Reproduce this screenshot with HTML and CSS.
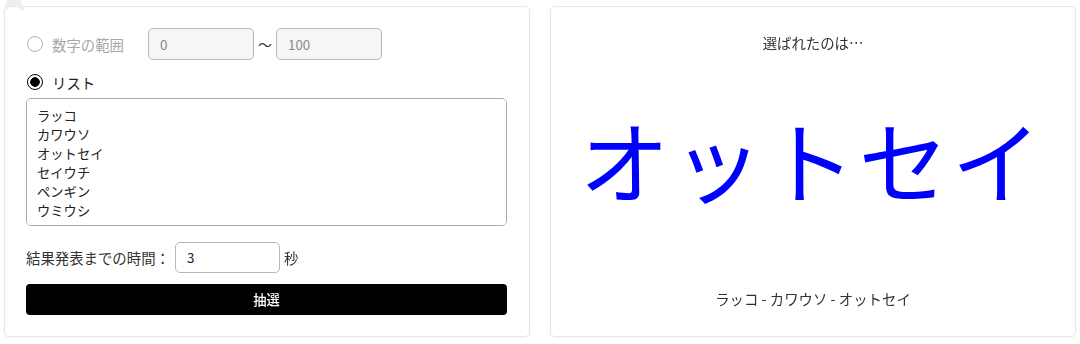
FILE: index.html
```html
<!DOCTYPE html>
<html lang="ja">
<head>
    <meta charset="UTF-8">
    <meta name="viewport" content="width=device-width, initial-scale=1.0">
    <title>抽選</title>
    <link rel="stylesheet" href="styles.css">
</head>
<body>
    <svg class="corner-star" width="30" height="24" viewBox="0 0 30 24">
        <polygon points="14,-16 18,-6 30,-6 21,1 25,12 14,5 3,12 7,1 -2,-6 10,-6" fill="#eeeeee"/>
    </svg>
    <main class="page">
        <section class="card settings">
            <div class="row range-row">
                <label class="choice disabled">
                    <input type="radio" name="mode">
                    <span>数字の範囲</span>
                </label>
                <input class="num-input" type="text" value="0" disabled>
                <span class="tilde">〜</span>
                <input class="num-input" type="text" value="100" disabled>
            </div>
            <div class="row list-row">
                <label class="choice">
                    <input type="radio" name="mode" checked>
                    <span>リスト</span>
                </label>
            </div>
            <textarea class="list-box">ラッコ
カワウソ
オットセイ
セイウチ
ペンギン
ウミウシ</textarea>
            <div class="row time-row">
                <span>結果発表までの時間：</span>
                <input class="num-input time-input" type="text" value="3">
                <span class="unit">秒</span>
            </div>
            <button class="draw-button">抽選</button>
        </section>
        <section class="card result">
            <div class="result-title">選ばれたのは…</div>
            <div class="result-name">オットセイ</div>
            <div class="result-history">ラッコ - カワウソ - オットセイ</div>
        </section>
    </main>
</body>
</html>
```

FILE: styles.css
```css
body {
    margin: 0;
    font-family: 'Noto Sans CJK JP', 'Noto Sans', sans-serif;
    color: #333;
    background: #fff;
}
.corner-star {
    position: absolute;
    top: 0;
    left: 0;
}
.page {
    display: flex;
    gap: 20px;
    padding: 6px 4px;
}
.card {
    box-sizing: border-box;
    width: 526px;
    height: 331px;
    border: 1px solid #e6e6e6;
    border-radius: 5px;
    background: #fff;
    box-shadow: 0 1px 2px rgba(0, 0, 0, 0.04);
}
.settings {
    display: flex;
    flex-direction: column;
    padding: 21px 22px 0 21px;
}
.row {
    display: flex;
    align-items: center;
    font-size: 14.4px;
}
.range-row {
    height: 32px;
}
.choice {
    display: flex;
    align-items: center;
    gap: 9px;
    color: #222;
}
.choice.disabled {
    color: #a8a8a8;
    width: 122px;
}
.choice input {
    appearance: none;
    box-sizing: border-box;
    width: 16px;
    height: 16px;
    margin: 0 0 0 1px;
    border: 1.5px solid #b4b4b4;
    border-radius: 50%;
    background: #fff;
}
.choice input:checked {
    border: 1.5px solid #000;
    background: radial-gradient(circle, #000 0 4.5px, #fff 5px);
}
.num-input {
    box-sizing: border-box;
    width: 106px;
    height: 32px;
    padding: 0 11px;
    border: 1px solid #b8b8b8;
    border-radius: 5px;
    font-family: inherit;
    font-size: 13.3px;
    color: #222;
    background: #fff;
}
.num-input:disabled {
    background: #f6f6f6;
    color: #8a8a8a;
}
.tilde {
    width: 22px;
    text-align: center;
    font-size: 14px;
    color: #333;
}
.list-row {
    height: 24px;
    margin-top: 10px;
}
.list-box {
    box-sizing: border-box;
    height: 128px;
    margin-top: 4px;
    padding: 7px 10px;
    border: 1px solid #a9a9a9;
    border-radius: 5px;
    font-family: inherit;
    font-size: 13.3px;
    line-height: 19px;
    color: #222;
    resize: none;
}
.time-row {
    height: 31px;
    margin-top: 16px;
}
.time-input {
    width: 105px;
    height: 31px;
    margin-left: 5px;
}
.unit {
    margin-left: 4px;
}
.draw-button {
    height: 31px;
    margin-top: 11px;
    border: none;
    border-radius: 4px;
    background: #000;
    color: #fff;
    font-family: inherit;
    font-size: 13.3px;
    font-weight: 500;
}
.result {
    display: flex;
    flex-direction: column;
    align-items: center;
    text-align: center;
}
.result-title {
    margin-top: 26px;
    font-size: 14.4px;
    line-height: 20px;
}
.result-name {
    margin: 57px 2px 0 0;
    font-size: 90px;
    line-height: 96px;
    letter-spacing: 3px;
    color: #0000ff;
}
.result-history {
    margin-top: 83px;
    font-size: 14.4px;
    line-height: 20px;
}
```
